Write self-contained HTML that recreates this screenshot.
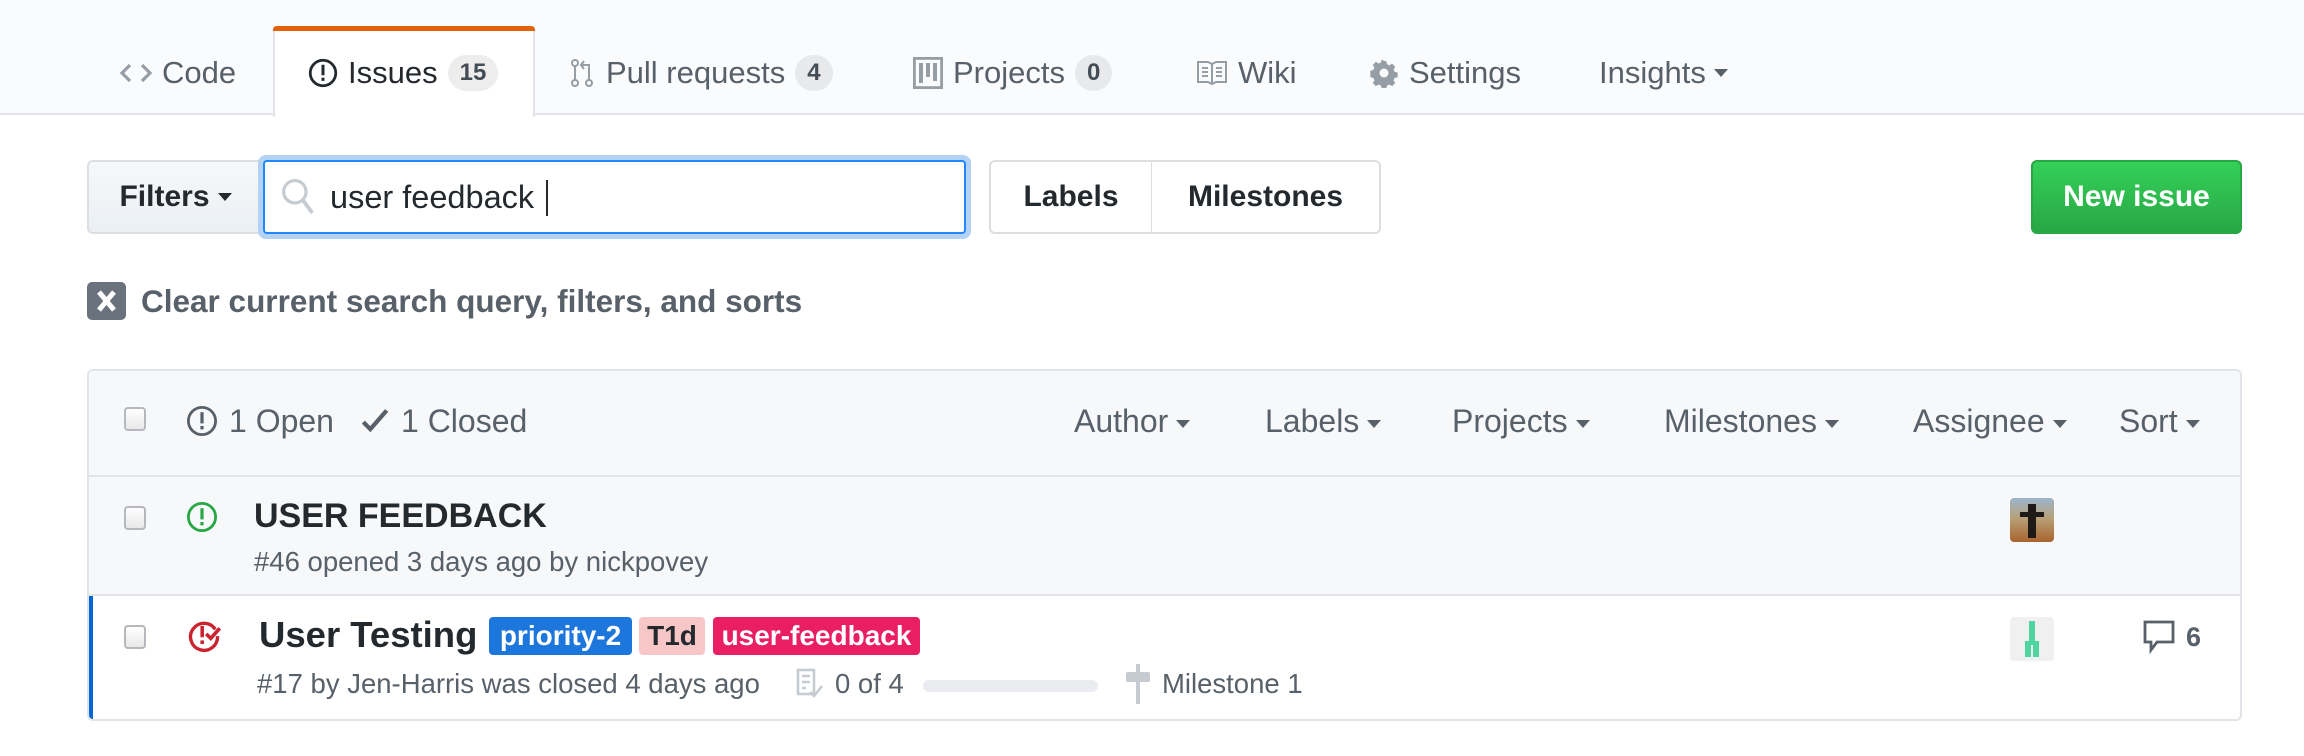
<!DOCTYPE html>
<html><head><meta charset="utf-8"><style>
*{box-sizing:border-box;margin:0;padding:0}
body{width:2304px;height:756px;background:#fff;font-family:"Liberation Sans",Arial,sans-serif;color:#24292e;position:relative;overflow:hidden}
.a{position:absolute;white-space:nowrap}
.topbg{position:absolute;left:0;top:0;width:2304px;height:115px;background:#fafbfc;border-bottom:2px solid #e1e4e8}
.tab{position:absolute;top:50px;font-size:31px;color:#586069;line-height:46px;display:flex;align-items:center}
.tab svg{margin-right:10px}
.cnt{display:inline-block;background:rgba(27,31,35,.08);color:#444d56;border-radius:40px;font-size:24px;font-weight:bold;padding:0 12px;line-height:36px;margin-left:10px}
.caret{display:inline-block;width:0;height:0;border-left:7px solid transparent;border-right:7px solid transparent;border-top:8px solid currentColor;margin-left:8px;vertical-align:middle}
.btn{position:absolute;top:160px;height:74px;border:2px solid #dcdee1;background:#fff;font-size:30px;font-weight:bold;color:#24292e;display:flex;align-items:center;justify-content:center}
.hd{position:absolute;top:400px;font-size:32px;color:#586069;line-height:42px}
.cb{position:absolute;width:22px;height:24px;border:2px solid #b5b8bc;border-radius:4px;background:linear-gradient(#fff,#e8e8e8)}
.lbl{position:absolute;top:617px;height:38px;border-radius:4px;font-size:28px;font-weight:bold;line-height:38px;text-align:center}
.sub{font-size:27.5px;color:#586069}
</style></head><body>
<div class="topbg"></div>
<div class="a" style="left:273px;top:26px;width:262px;height:91px;background:#fff;border:2px solid #e1e4e8;border-top:none;border-bottom:none"></div>
<div class="a" style="left:273px;top:26px;width:262px;height:5px;background:#e36209;border-radius:4px 4px 0 0"></div>

<div class="tab" style="left:120px"><svg width="32" height="28" viewBox="0 0 16 14"><path d="M5 3L1 7l4 4M11 3l4 4-4 4" fill="none" stroke="#959da5" stroke-width="1.6"/></svg>Code</div>
<div class="tab" style="left:308px;color:#24292e"><svg width="30" height="30" viewBox="0 0 16 16"><circle cx="8" cy="8" r="6.8" fill="none" stroke="#24292e" stroke-width="1.5"/><rect x="7.2" y="3.6" width="1.6" height="5.6" fill="#24292e"/><rect x="7.2" y="10.5" width="1.6" height="1.7" fill="#24292e"/></svg>Issues<span class="cnt">15</span></div>
<div class="tab" style="left:568px"><svg width="28" height="32" viewBox="0 0 12 16"><circle cx="2.5" cy="3" r="1.5" fill="none" stroke="#959da5"/><circle cx="2.5" cy="13" r="1.5" fill="none" stroke="#959da5"/><circle cx="9.5" cy="13" r="1.5" fill="none" stroke="#959da5"/><path d="M2.5 4.5v7M9.5 11.5V4H6M7 2L5.5 4 7 6" fill="none" stroke="#959da5"/></svg>Pull requests<span class="cnt">4</span></div>
<div class="tab" style="left:913px"><svg width="30" height="32" viewBox="0 0 15 16"><rect x="0.7" y="0.7" width="13.6" height="14.6" fill="none" stroke="#959da5" stroke-width="1.4"/><rect x="3" y="3" width="2" height="10" fill="#959da5"/><rect x="6.5" y="3" width="2" height="7" fill="#959da5"/><rect x="10" y="3" width="2" height="9" fill="#959da5"/></svg>Projects<span class="cnt">0</span></div>
<div class="tab" style="left:1196px"><svg width="32" height="26" viewBox="0 0 16 13"><path d="M1 1h5l2 1 2-1h5v10h-5l-2 1-2-1H1z M8 2v10M3 4h3M3 6h3M3 8h3M10 4h3M10 6h3M10 8h3" fill="none" stroke="#959da5"/></svg>Wiki</div>
<div class="tab" style="left:1369px"><svg width="30" height="30" viewBox="0 0 16 16"><path d="M8 1.5l1.2.2.4 1.6 1.3.6 1.4-.9 1.7 1.7-.9 1.4.6 1.3 1.6.4v2.4l-1.6.4-.6 1.3.9 1.4-1.7 1.7-1.4-.9-1.3.6-.4 1.6H6.8l-.4-1.6-1.3-.6-1.4.9-1.7-1.7.9-1.4-.6-1.3-1.6-.4V6.8l1.6-.4.6-1.3-.9-1.4 1.7-1.7 1.4.9 1.3-.6.4-1.6z" fill="#959da5"/><circle cx="8" cy="8" r="2.4" fill="#fafbfc"/></svg>Settings</div>
<div class="tab" style="left:1599px">Insights<span class="caret"></span></div>

<div class="btn" style="left:87px;width:177px;border-radius:6px 0 0 6px;background:linear-gradient(#f6f8fa,#ebf0f4)">Filters<span class="caret" style="color:#24292e"></span></div>
<div class="a" style="left:258px;top:155px;width:713px;height:84px;border:6px solid #b4d2f4;border-radius:8px"></div>
<div class="a" style="left:263px;top:160px;width:703px;height:74px;border:2px solid #2188ff;border-radius:4px;background:#fff"></div>
<svg class="a" style="left:281px;top:178px" width="34" height="38" viewBox="0 0 16 18"><circle cx="6.5" cy="6.5" r="5.3" fill="none" stroke="#c6cbd1" stroke-width="1.5"/><path d="M10.3 10.5l4.5 6" stroke="#c6cbd1" stroke-width="1.8"/></svg>
<div class="a" style="left:330px;top:177px;font-size:32.5px;color:#24292e;line-height:40px">user feedback</div>
<div class="a" style="left:546px;top:180px;width:2px;height:36px;background:#24292e"></div>
<div class="btn" style="left:989px;width:164px;border-radius:6px 0 0 6px">Labels</div>
<div class="btn" style="left:1151px;width:230px;border-radius:0 6px 6px 0;border-left:1px solid #dcdee1">Milestones</div>
<div class="btn" style="left:2031px;width:211px;border:2px solid #28a745;border-radius:6px;background:linear-gradient(#34d058,#28a745);color:#fff">New issue</div>

<div class="a" style="left:87px;top:282px;width:39px;height:38px;background:#6a737d;border-radius:5px"><svg width="39" height="38" viewBox="0 0 39 38"><path d="M12 10l15 18M27 10L12 28" stroke="#fff" stroke-width="5"/></svg></div>
<div class="a" style="left:141px;top:281px;font-size:31.5px;font-weight:bold;color:#586069;line-height:40px">Clear current search query, filters, and sorts</div>

<div class="a" style="left:87px;top:369px;width:2155px;height:352px;border:2px solid #e1e4e8;border-radius:6px;overflow:hidden">
 <div style="position:absolute;left:0;top:0;width:100%;height:106px;background:#f6f8fa;border-bottom:2px solid #e1e4e8"></div>
 <div style="position:absolute;left:0;top:106px;width:100%;height:119px;background:#f6f8fa;border-bottom:2px solid #e1e4e8"></div>
 <div style="position:absolute;left:0;top:225px;width:4px;height:130px;background:#0366d6"></div>
</div>
<div class="cb" style="left:124px;top:407px"></div>
<svg class="a" style="left:186px;top:404px" width="32" height="34" viewBox="0 0 16 16"><circle cx="8" cy="8" r="6.8" fill="none" stroke="#586069" stroke-width="1.4"/><rect x="7.2" y="3.6" width="1.6" height="5.6" fill="#586069"/><rect x="7.2" y="10.5" width="1.6" height="1.7" fill="#586069"/></svg>
<div class="hd" style="left:229px">1 Open</div>
<svg class="a" style="left:361px;top:408px" width="28" height="26" viewBox="0 0 12 11"><path d="M1 6l3 3 7-8" fill="none" stroke="#586069" stroke-width="1.8"/></svg>
<div class="hd" style="left:401px">1 Closed</div>
<div class="hd" style="left:1074px">Author<span class="caret"></span></div>
<div class="hd" style="left:1265px">Labels<span class="caret"></span></div>
<div class="hd" style="left:1452px">Projects<span class="caret"></span></div>
<div class="hd" style="left:1664px">Milestones<span class="caret"></span></div>
<div class="hd" style="left:1913px">Assignee<span class="caret"></span></div>
<div class="hd" style="left:2119px">Sort<span class="caret"></span></div>

<div class="cb" style="left:124px;top:506px"></div>
<svg class="a" style="left:186px;top:500px" width="32" height="34" viewBox="0 0 16 16"><circle cx="8" cy="8" r="6.8" fill="none" stroke="#28a745" stroke-width="1.4"/><rect x="7.2" y="3.6" width="1.6" height="5.6" fill="#28a745"/><rect x="7.2" y="10.5" width="1.6" height="1.7" fill="#28a745"/></svg>
<div class="a" style="left:254px;top:496px;font-size:34px;font-weight:bold;line-height:40px">USER FEEDBACK</div>
<div class="a sub" style="left:254px;top:546px;line-height:32px">#46 opened 3 days ago by nickpovey</div>
<div class="a" style="left:2010px;top:498px;width:44px;height:44px;border-radius:4px;background:linear-gradient(#9bb4cc 0%,#b8a27a 45%,#a8632c 100%)"><div style="position:absolute;left:18px;top:6px;width:8px;height:34px;background:#1d1a17"></div><div style="position:absolute;left:10px;top:14px;width:24px;height:5px;background:#1d1a17"></div></div>

<div class="cb" style="left:124px;top:625px"></div>
<svg class="a" style="left:186px;top:617px" width="36" height="36" viewBox="0 0 16 16"><path d="M13 5.5A6 6 0 1 0 14 8.5" fill="none" stroke="#cb2431" stroke-width="1.5"/><rect x="6.4" y="4" width="1.6" height="5" fill="#cb2431"/><rect x="6.4" y="10.4" width="1.6" height="1.6" fill="#cb2431"/><path d="M9 7.5l2 2 4-4.5" fill="none" stroke="#cb2431" stroke-width="1.6"/></svg>
<div class="a" style="left:259px;top:614px;font-size:36.5px;font-weight:bold;line-height:42px">User Testing</div>
<div class="lbl" style="left:489px;width:143px;background:#1d76db;color:#fff">priority-2</div>
<div class="lbl" style="left:639px;width:66px;background:#f7c6c7;color:#24292e">T1d</div>
<div class="lbl" style="left:713px;width:207px;background:#e91e63;color:#fff">user-feedback</div>
<div class="a sub" style="left:257px;top:668px;line-height:32px">#17 by Jen-Harris was closed 4 days ago</div>
<svg class="a" style="left:795px;top:668px" width="30" height="32" viewBox="0 0 14 16"><rect x="1" y="1" width="8" height="12" fill="none" stroke="#c6cbd1" stroke-width="1.3"/><path d="M3 4h4M3 7h4M3 10h2M7 12l2 2 4-5" fill="none" stroke="#c6cbd1" stroke-width="1.3"/></svg>
<div class="a sub" style="left:835px;top:668px;line-height:32px">0 of 4</div>
<div class="a" style="left:923px;top:680px;width:175px;height:12px;border-radius:6px;background:#eaecef"></div>
<svg class="a" style="left:1124px;top:664px" width="28" height="40" viewBox="0 0 14 20"><rect x="1" y="4" width="12" height="5" rx="1" fill="#c6cbd1"/><rect x="6" y="0" width="2" height="20" fill="#c6cbd1"/></svg>
<div class="a sub" style="left:1162px;top:668px;line-height:32px">Milestone 1</div>
<div class="a" style="left:2010px;top:617px;width:44px;height:44px;border-radius:4px;background:#f0f0f0"><svg width="44" height="44" viewBox="0 0 44 44"><path d="M19 4h6v20h4v16h-6V28h-2v12h-6V24h4z" fill="#4ed69e"/></svg></div>
<svg class="a" style="left:2143px;top:620px" width="32" height="34" viewBox="0 0 16 17"><path d="M1 1h14v10H7l-3 4v-4H1z" fill="none" stroke="#586069" stroke-width="1.4"/></svg>
<div class="a" style="left:2186px;top:619px;font-size:27px;font-weight:bold;color:#586069;line-height:36px">6</div>
</body></html>
